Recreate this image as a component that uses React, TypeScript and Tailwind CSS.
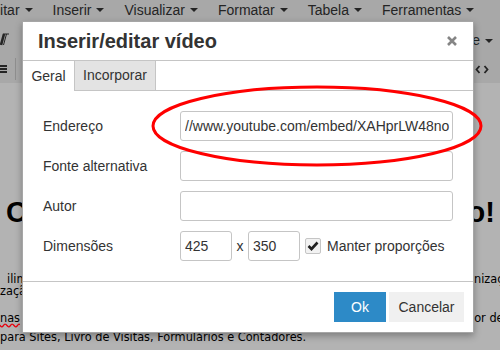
import clsx from 'clsx';

const menus = ['Editar', 'Inserir', 'Visualizar', 'Formatar', 'Tabela', 'Ferramentas'];

function Caret({ color = 'border-t-[#242424]' }: { color?: string }) {
  return <span className={clsx('ml-[5px] inline-block h-0 w-0 border-x-[4px] border-t-[4px] border-x-transparent', color)} />;
}

function Field({ label, value }: { label: string; value?: string }) {
  return (
    <div className="flex h-[30px] items-center">
      <label className="w-[137px] text-[14px] text-[#333]">{label}</label>
      <input
        readOnly
        value={value ?? ''}
        className="h-[30px] w-[273px] rounded-[3px] border border-[#c5c5c5] bg-white pl-[4px] text-[14px] text-[#333] outline-none"
      />
    </div>
  );
}

export default function App() {
  return (
    <div className="relative h-[350px] w-[500px] overflow-hidden bg-[#b3b3b3] font-['Liberation_Sans',Arial,sans-serif]">
      {/* editor behind the modal, dimmed by the overlay */}
      <div className="bg-[#a8a8a8] text-[#242424]">
        <div className="flex h-[20px] items-center gap-[20px] whitespace-nowrap text-[14px]">
          {menus.map((m, i) => (
            <div key={m} className={clsx('flex shrink-0 items-center', i === 0 && 'ml-[-17px]')}>
              <span>{m}</span>
              <Caret />
            </div>
          ))}
        </div>
        <div className="flex h-[35px] items-center justify-between">
          <svg width="9" height="13" viewBox="0 0 9 13" className="mt-[3px]">
            <path d="M1 12 L4 1" stroke="#242424" strokeWidth="2.6" />
            <path d="M3 1 H9 M6.5 1 L3.5 12" stroke="#242424" strokeWidth="1" />
          </svg>
          <div className="mt-[6px] flex items-center pr-[7px] text-[14px]">
            <span>Fonte</span>
            <Caret />
          </div>
        </div>
        <div className="flex h-[28px] items-center justify-between">
          <div className="flex items-center">
            <div className="flex w-[7px] flex-col gap-[1px]">
              <span className="h-[2px] bg-[#242424]" />
              <span className="h-[2px] bg-[#242424]" />
              <span className="h-[2px] bg-[#242424]" />
            </div>
            <span className="ml-[8px] h-[22px] w-px bg-[#8f8f8f]" />
          </div>
          <svg width="14" height="9" viewBox="0 0 14 9" className="mr-[11px]">
            <path d="M4.5 1 L1.5 4.5 L4.5 8 M9.5 1 L12.5 4.5 L9.5 8" stroke="#242424" strokeWidth="1.8" fill="none" />
          </svg>
        </div>
      </div>

      <div className="text-black">
        <div className="mt-[112px] flex h-[34px] items-center justify-between whitespace-nowrap pl-[6px] pr-[5px] text-[29px] font-bold leading-[34px]">
          <span>Crie</span>
          <span>rápido!</span>
        </div>
        <div className="font-['DejaVu_Sans_Condensed','DejaVu_Sans',sans-serif] text-[12.6px] leading-[12px] whitespace-nowrap">
          <div className="mt-[44px] flex h-[12px]">
            <span className="w-[468px] shrink-0 pl-[7px]">ilimitados</span>
            <span className="pl-[6px]">nizações</span>
          </div>
          <div className="h-[12px]">zação</div>
          <div className="mt-[15px] flex h-[12px]">
            <span className="w-[467px] shrink-0">
              <span className="underline decoration-red-600 decoration-wavy">nas</span>
            </span>
            <span>por de</span>
          </div>
          <div className="mt-[7px] h-[12px]">para Sites, Livro de Visitas, Formulários e Contadores.</div>
        </div>
      </div>

      {/* modal window */}
      <div className="absolute left-[22px] top-[21px] w-[452px] border border-[#a6a6a6] bg-white text-[#333] shadow-[0_3px_7px_rgba(0,0,0,0.3)]">
        <div className="flex h-[39px] items-center justify-between border-b border-[#c5c5c5] pl-[15px] pr-[16px]">
          <h1 className="text-[20px] font-bold leading-[20px]">Inserir/editar vídeo</h1>
          <svg width="10" height="10" viewBox="0 0 10 10">
            <path d="M1 1 L9 9 M9 1 L1 9" stroke="#858585" strokeWidth="2.6" />
          </svg>
        </div>
        <div className="flex h-[30px] items-start border-b border-[#c5c5c5] text-[14px]">
          <div className="relative flex h-[30px] w-[51px] items-center justify-center bg-white">Geral</div>
          <div className="flex h-[29px] w-[82px] items-center justify-center border-x border-[#c5c5c5] bg-[#e3e3e3]">
            Incorporar
          </div>
        </div>
        <div className="flex flex-col gap-[10px] pb-[20px] pl-[20px] pt-[20px]">
          <Field label="Endereço" value="//www.youtube.com/embed/XAHprLW48no" />
          <Field label="Fonte alternativa" />
          <Field label="Autor" />
          <div className="flex h-[30px] items-center">
            <label className="w-[137px] text-[14px]">Dimensões</label>
            <input
              readOnly
              value="425"
              className="h-[30px] w-[52px] rounded-[3px] border border-[#c5c5c5] bg-white pl-[4px] text-[14px] text-[#333] outline-none"
            />
            <span className="w-[16px] text-center text-[14px]">x</span>
            <input
              readOnly
              value="350"
              className="h-[30px] w-[52px] rounded-[3px] border border-[#c5c5c5] bg-white pl-[4px] text-[14px] text-[#333] outline-none"
            />
            <span className="ml-[5px] flex h-[16px] w-[16px] items-center justify-center rounded-[2px] border border-[#c5c5c5] bg-[#f2f2f2]">
              <svg width="12" height="10" viewBox="0 0 12 10">
                <path d="M1.5 5 L4.5 8 L10.5 1.5" stroke="#222" strokeWidth="2.6" fill="none" />
              </svg>
            </span>
            <span className="ml-[6px] text-[14px]">Manter proporções</span>
          </div>
        </div>
        <div className="flex justify-end gap-[3px] border-t border-[#c5c5c5] py-[10px] pr-[9px] text-[14px]">
          <button className="h-[30px] w-[52px] bg-[#2d8ac7] text-white">Ok</button>
          <button className="h-[30px] w-[75px] bg-[#f0f0f0] text-[#333]">Cancelar</button>
        </div>
      </div>

      {/* red highlight drawn over the screenshot */}
      <svg className="pointer-events-none absolute left-0 top-0" width="500" height="350">
        <ellipse cx="317" cy="126" rx="164" ry="39" fill="none" stroke="#ff0000" strokeWidth="3" />
      </svg>
    </div>
  );
}
